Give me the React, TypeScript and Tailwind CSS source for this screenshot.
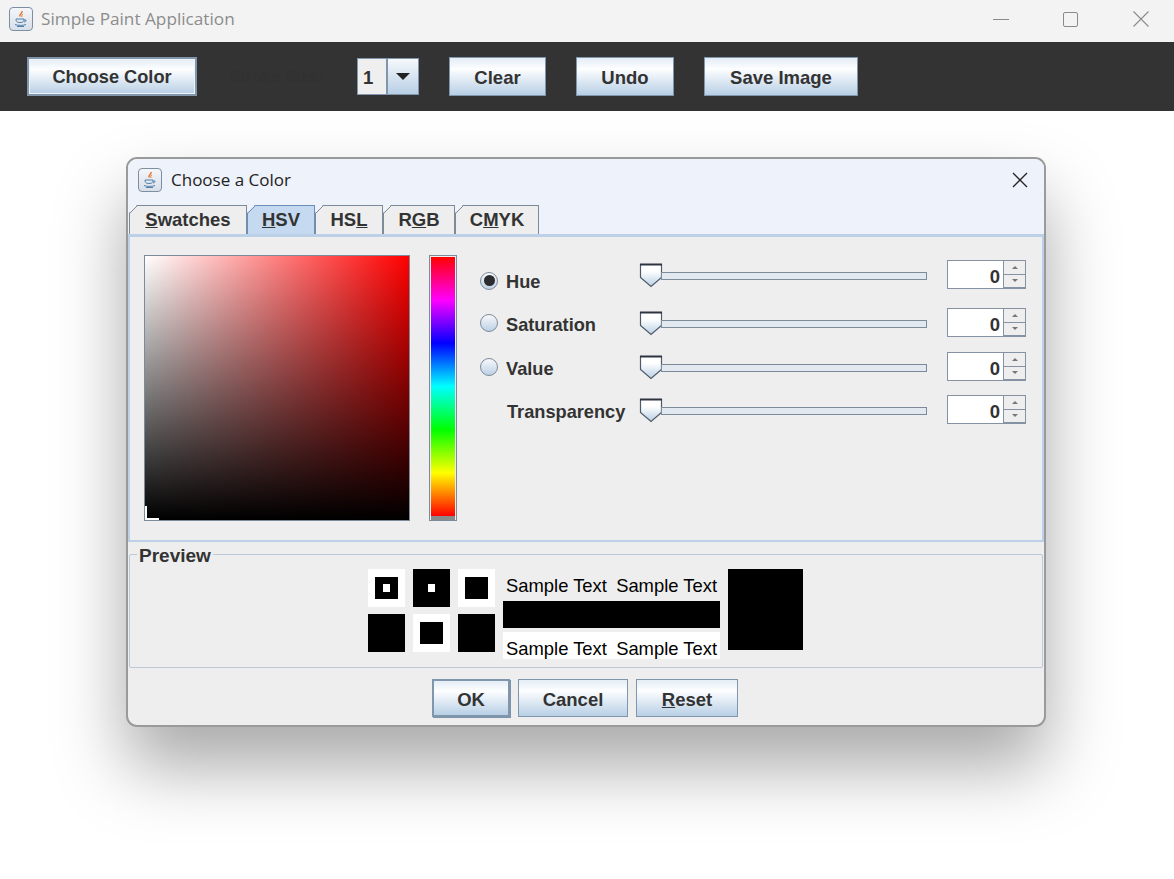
import React from "react";

const font = { fontFamily: '"Liberation Sans", Arial, sans-serif' };

function JavaIcon() {
  return (
    <div className="w-[24px] h-[24px] rounded-[4px] border border-[#7d8ea3] bg-gradient-to-b from-[#f4f6fa] to-[#d8dfe9] flex items-center justify-center shrink-0">
      <svg width="16" height="18" viewBox="0 0 16 18" fill="none">
        <path d="M9 1c1 2-3 3-2 5.500" stroke="#e8762d" strokeWidth="1.500" />
        <path d="M10 4c-1 1-2 1.500-1 3" stroke="#e8762d" strokeWidth="1" />
        <path d="M3 9h8c0 2-.500 3.500-4 3.500S3 11 3 9z" stroke="#4f7ea8" strokeWidth="1" />
        <path d="M11 10h2c.500 1-1 2-2 2" stroke="#4f7ea8" strokeWidth="1" />
        <path d="M2 14.500c2 1.200 9 1.200 11 0M4 16.500h7" stroke="#4f7ea8" strokeWidth="1" />
      </svg>
    </div>
  );
}

function JButton({
  children,
  className,
}: {
  children: React.ReactNode;
  className: string;
}) {
  return (
    <div
      className={`flex items-center justify-center border-[#7f96ad] bg-gradient-to-b from-[#e4edf5] via-[#fdfeff] via-30% to-[#b8cfe5] font-bold text-[#333] ${className}`}
    >
      {children}
    </div>
  );
}

function Tab({
  children,
  active,
  className,
}: {
  children: React.ReactNode;
  active?: boolean;
  className: string;
}) {
  return (
    <div className={`relative h-[29px] ${className}`}>
      <div
        className={`h-full flex items-center justify-center border border-b-0 text-[18.5px] font-bold text-[#333] [clip-path:polygon(8px_0,100%_0,100%_100%,0_100%,0_8px)] ${
          active ? "border-[#6b8fbd] bg-[#c5daf0]" : "border-[#7d8a99] bg-[#eeeeee]"
        }`}
      >
        <span>{children}</span>
      </div>
      <svg width="10" height="10" viewBox="0 0 10 10" className="absolute left-0 top-0">
        <path d="M0 9L9 0" stroke={active ? "#6b8fbd" : "#7d8a99"} strokeWidth="1" />
      </svg>
    </div>
  );
}

function Thumb() {
  return (
    <svg width="24" height="25" viewBox="0 0 24 25" className="shrink-0">
      <defs>
        <linearGradient id="thumbFill" x1="0" y1="0" x2="0" y2="1">
          <stop offset="0.300" stopColor="#ffffff" />
          <stop offset="1" stopColor="#b8cfe5" />
        </linearGradient>
      </defs>
      <path d="M1.500 1.500h21v13l-10.500 9-10.500-9z" fill="url(#thumbFill)" stroke="#4f5a68" strokeWidth="1.200" />
      <path d="M1 1.500h22" stroke="#2c3440" strokeWidth="2" />
    </svg>
  );
}

function Spinner() {
  return (
    <div className="flex w-[79px] h-[29px] shrink-0">
      <div className="w-[56px] border border-[#8592a3] border-r-0 bg-white flex items-center justify-end pt-[5px] pr-[3px] text-[18.5px] font-bold text-[#333]">
        0
      </div>
      <div className="w-[23px] flex flex-col">
        <div className="flex-1 border border-[#8592a3] bg-[#eeeeee] flex items-center justify-center">
          <div className="w-0 h-0 border-x-[3px] border-x-transparent border-b-[3px] border-b-[#777]" />
        </div>
        <div className="flex-1 border border-t-0 border-b-2 border-[#8592a3] bg-[#eeeeee] flex items-center justify-center">
          <div className="w-0 h-0 border-x-[3px] border-x-transparent border-t-[3px] border-t-[#777]" />
        </div>
      </div>
    </div>
  );
}

function Radio({ checked }: { checked?: boolean }) {
  return (
    <div className="w-[18px] h-[18px] rounded-full border border-[#7d8a99] bg-gradient-to-b from-[#f8f9fb] to-[#bcd0e6] flex items-center justify-center shrink-0">
      {checked && <div className="w-[11px] h-[11px] rounded-full bg-[#2b2b30]" />}
    </div>
  );
}

function SliderRow({
  label,
  radio,
  checked,
  rowClass,
  radioClass,
  labelClass,
}: {
  label: string;
  radio: boolean;
  checked?: boolean;
  rowClass: string;
  radioClass: string;
  labelClass: string;
}) {
  return (
    <div className={`flex items-center ${rowClass}`}>
      <div className={`w-[18px] shrink-0 ${radioClass}`}>{radio && <Radio checked={checked} />}</div>
      <div className={`w-[141px] shrink-0 text-[18.2px] font-bold text-[#333] ${labelClass}`}>{label}</div>
      <div className="w-[288px] shrink-0 flex items-center pt-[2px]">
        <Thumb />
        <div className="flex-1 h-[8px] -ml-[2px] border border-[#7d8a99] bg-[#e2e8f0]" />
      </div>
      <div className="w-[20px] shrink-0" />
      <Spinner />
    </div>
  );
}

function PreviewSquare({
  outer,
  inner,
  dot,
}: {
  outer: string;
  inner: string;
  dot?: string;
}) {
  return (
    <div className={`w-[37px] h-[38px] flex items-center justify-center ${outer}`}>
      <div className={`w-[23px] h-[22px] flex items-center justify-center ${inner}`}>
        {dot && <div className={`w-[7px] h-[8px] ${dot}`} />}
      </div>
    </div>
  );
}

export default function App() {
  return (
    <div className="w-[1174px] h-[879px] bg-white overflow-hidden flex flex-col" style={font}>
      <div className="h-[42px] shrink-0 bg-[#f3f3f3] flex items-center pl-[9px] pb-[4px]">
        <JavaIcon />
        <span className="ml-[8px] text-[17.2px] text-[#8c8c8c] font-['Open_Sans',sans-serif]">
          Simple Paint Application
        </span>
        <div className="ml-auto flex items-center">
          <div className="w-[16px] h-px bg-[#8a8a8a] mr-[54px]" />
          <div className="w-[15px] h-[15px] border border-[#8a8a8a] rounded-[2px] mr-[55px]" />
          <svg width="16" height="16" viewBox="0 0 16 16" className="mr-[25px]">
            <path d="M.500.500l15 15M15.500.500l-15 15" stroke="#8a8a8a" strokeWidth="1.100" />
          </svg>
        </div>
      </div>

      <div className="h-[69px] shrink-0 bg-[#333333] flex items-center pl-[27px]">
        <JButton className="w-[170px] h-[39px] border-2 pt-[3px] text-[18.2px] shadow-[inset_0_0_0_1px_#eef4fa]">
          Choose Color
        </JButton>
        <span className="ml-[32px] w-[128px] text-[16.5px] font-bold text-[#313131]">Stroke Size:</span>
        <div className="w-[62px] h-[37px] flex border border-[#7f96ad]">
          <div className="w-[30px] bg-[#efefef] border-r-2 border-[#7f96ad] flex items-center pl-[5px] pt-[3px] text-[18.5px] font-bold text-[#333]">
            1
          </div>
          <div className="flex-1 bg-gradient-to-b from-[#f6f9fc] to-[#b8cfe5] flex items-center justify-center">
            <div className="w-0 h-0 border-x-[7px] border-x-transparent border-t-[7px] border-t-[#222]" />
          </div>
        </div>
        <JButton className="ml-[30px] w-[97px] h-[39px] border pt-[3px] text-[18.5px]">Clear</JButton>
        <JButton className="ml-[30px] w-[98px] h-[39px] border pt-[3px] text-[18.5px]">Undo</JButton>
        <JButton className="ml-[30px] w-[154px] h-[39px] border pt-[3px] text-[18.5px]">Save Image</JButton>
      </div>

      <div className="flex-1 pl-[126px] pt-[46px]">
        <div className="w-[920px] h-[570px] rounded-[11px] border-2 border-[#9a9a9a] bg-[#eeeeee] overflow-hidden flex flex-col shadow-[0_40px_70px_0_rgba(0,0,0,0.34)]">
          <div className="h-[42px] shrink-0 bg-[#eef2fa] flex items-center pl-[10px] pr-[16px]">
            <JavaIcon />
            <span className="ml-[9px] text-[17px] text-[#222] font-['Open_Sans',sans-serif]">Choose a Color</span>
            <svg width="16" height="16" viewBox="0 0 16 16" className="ml-auto">
              <path d="M1 1l14 14M15 1L1 15" stroke="#222" strokeWidth="1.300" />
            </svg>
          </div>

          <div className="h-[33px] shrink-0 bg-[#eef2fa] flex items-end pl-[1px] -mb-px relative z-10">
            <Tab className="w-[118px]">
              <u>S</u>watches
            </Tab>
            <Tab active className="w-[68px]">
              <u>H</u>SV
            </Tab>
            <Tab className="w-[68px]">
              HS<u>L</u>
            </Tab>
            <Tab className="w-[72px]">
              R<u>G</u>B
            </Tab>
            <Tab className="w-[84px]">
              C<u>M</u>YK
            </Tab>
          </div>

          <div className="h-[309px] shrink-0 border-2 border-t-4 border-[#bcd0e8] flex pl-[14px] pt-[18px]">
            <div className="w-[266px] h-[266px] shrink-0 border border-[#7d8a99] bg-[linear-gradient(to_top,#000,transparent),linear-gradient(to_right,#fff,#f00)] relative">
              <div className="absolute left-0 bottom-0 w-[14px] h-[2px] bg-white" />
              <div className="absolute left-0 bottom-0 w-[2px] h-[14px] bg-white" />
            </div>
            <div className="ml-[19px] w-[28px] h-[266px] shrink-0 border border-[#7d8a99] px-px pt-px flex flex-col bg-[#eeeeee]">
              <div className="flex-1 bg-[linear-gradient(to_bottom,#f00,#f0f,#00f,#0ff,#0f0,#ff0,#f00)]" />
              <div className="h-[4px] bg-[#8a8a8a]" />
            </div>
            <div className="ml-[23px] w-[546px] pt-[5px] flex flex-col">
              <SliderRow label="Hue" radio checked rowClass="h-[29px]" radioClass="pt-[12px]" labelClass="pl-[8px] pt-[16px]" />
              <SliderRow label="Saturation" radio rowClass="h-[29px] mt-[19px]" radioClass="" labelClass="pl-[8px] pt-[6px]" />
              <SliderRow label="Value" radio rowClass="h-[29px] mt-[15px]" radioClass="" labelClass="pl-[8px] pt-[6px]" />
              <SliderRow label="Transparency" radio={false} rowClass="h-[29px] mt-[14px]" radioClass="" labelClass="pl-[9px] pt-[6px]" />
            </div>
          </div>

          <div className="h-[128px] shrink-0 px-[1px] pt-[12px] relative">
            <div className="h-[114px] border border-[#bcc9d8] rounded-[2px] flex pl-[238px] pt-[14px]">
              <div className="grid grid-cols-[37px_37px_37px] gap-x-[8px] gap-y-[7px] content-start">
                <PreviewSquare outer="bg-white" inner="bg-black" dot="bg-white" />
                <PreviewSquare outer="bg-black" inner="bg-black" dot="bg-white" />
                <PreviewSquare outer="bg-white" inner="bg-black" />
                <PreviewSquare outer="bg-black" inner="bg-black" />
                <PreviewSquare outer="bg-white" inner="bg-black" />
                <PreviewSquare outer="bg-black" inner="bg-black" />
              </div>
              <div className="ml-[8px] w-[217px] flex flex-col text-[18.4px] text-black">
                <div className="h-[32px] flex items-center justify-between px-[3px] pt-[2px]">
                  <span>Sample Text</span>
                  <span>Sample Text</span>
                </div>
                <div className="h-[27px] bg-black" />
                <div className="h-[27px] mt-[4px] bg-white flex items-center justify-between px-[3px] pt-[6px]">
                  <span>Sample Text</span>
                  <span>Sample Text</span>
                </div>
              </div>
              <div className="ml-[8px] w-[75px] h-[81px] bg-black" />
            </div>
            <span className="absolute left-[9px] top-[4px] bg-[#eeeeee] px-[2px] text-[19px] leading-[20px] font-bold text-[#333]">
              Preview
            </span>
          </div>

          <div className="flex-1 flex items-start pl-[304px] pt-[9px]">
            <JButton className="w-[78px] h-[38px] border-2 pt-[4px] text-[18.5px] shadow-[1px_1px_0_#7d93aa]">OK</JButton>
            <JButton className="ml-[8px] w-[110px] h-[38px] border pt-[4px] text-[18.5px]">Cancel</JButton>
            <JButton className="ml-[8px] w-[102px] h-[38px] border pt-[4px] text-[18.5px]">
              <span>
                <u>R</u>eset
              </span>
            </JButton>
          </div>
        </div>
      </div>
    </div>
  );
}
